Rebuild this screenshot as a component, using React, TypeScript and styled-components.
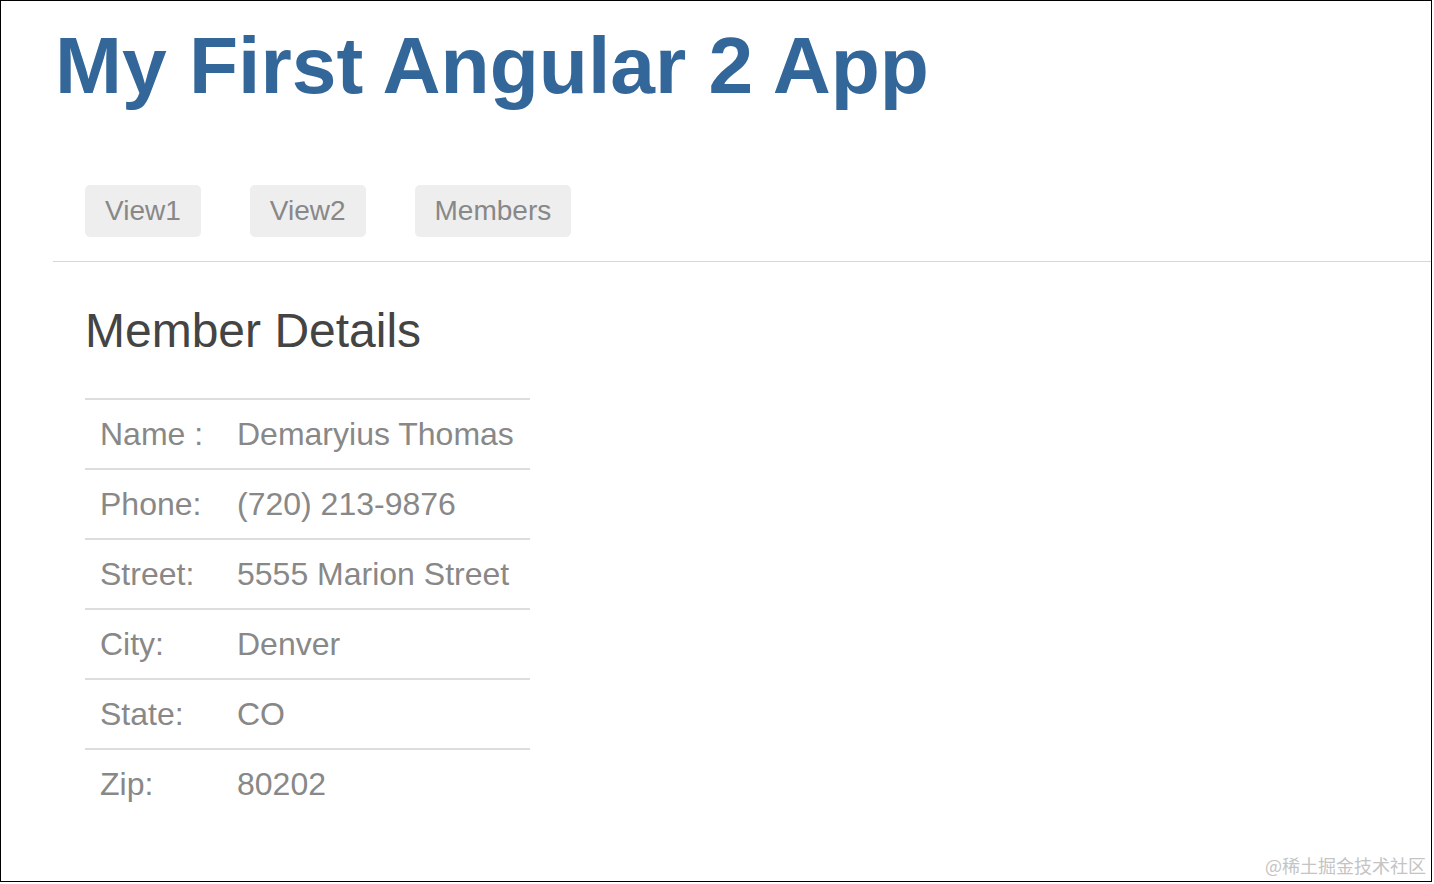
import React from "react";
import styled, { createGlobalStyle } from "styled-components";

const GlobalStyle = createGlobalStyle`
  html, body {
    margin: 0;
    padding: 0;
    background: #fff;
    font-family: "Liberation Sans", Arial, Helvetica, sans-serif;
  }
`;

const Frame = styled.div`
  position: relative;
  box-sizing: border-box;
  width: 1432px;
  height: 882px;
  border: 1px solid #000;
  padding-left: 52px;
  overflow: hidden;
`;

const Title = styled.h1`
  margin: 24px 0 0 2px;
  font-size: 80.4px;
  line-height: 1;
  font-weight: bold;
  color: #336699;
  white-space: nowrap;
`;

const Nav = styled.nav`
  display: flex;
  gap: 49px;
  margin-top: 80px;
  padding-left: 32px;
  padding-bottom: 24px;
  border-bottom: 1px solid #d6d6d6;
`;

const NavButton = styled.a`
  display: block;
  height: 52px;
  line-height: 52px;
  padding: 0 20px;
  font-size: 28px;
  color: #888;
  background: #eeeeee;
  border-radius: 5px;
  text-decoration: none;
  cursor: pointer;
`;

const Section = styled.section`
  padding-left: 32px;
`;

const Heading = styled.h2`
  margin: 45px 0 0 0;
  font-size: 48px;
  line-height: 1;
  font-weight: normal;
  color: #444;
`;

const Table = styled.table`
  margin-top: 43px;
  width: 445px;
  border-collapse: collapse;
  font-size: 32px;
  color: #888;
`;

const Row = styled.tr`
  border-top: 2px solid #dddddd;
`;

const Cell = styled.td<{ $label?: boolean }>`
  height: 68px;
  line-height: 68px;
  padding: 0 15px;
  white-space: nowrap;
  width: ${(p) => (p.$label ? "107px" : "auto")};
`;

const Watermark = styled.div`
  position: absolute;
  right: 5px;
  bottom: 3px;
  font-size: 18px;
  color: #c4c4c4;
  font-family: "Noto Sans CJK SC", "Liberation Sans", sans-serif;
`;

const member = [
  ["Name :", "Demaryius Thomas"],
  ["Phone:", "(720) 213-9876"],
  ["Street:", "5555 Marion Street"],
  ["City:", "Denver"],
  ["State:", "CO"],
  ["Zip:", "80202"],
];

export default function App() {
  return (
    <>
      <GlobalStyle />
      <Frame>
        <Title>My First Angular 2 App</Title>
        <Nav>
          <NavButton>View1</NavButton>
          <NavButton>View2</NavButton>
          <NavButton>Members</NavButton>
        </Nav>
        <Section>
          <Heading>Member Details</Heading>
          <Table>
            <tbody>
              {member.map(([label, value]) => (
                <Row key={label}>
                  <Cell $label>{label}</Cell>
                  <Cell>{value}</Cell>
                </Row>
              ))}
            </tbody>
          </Table>
        </Section>
        <Watermark>@稀土掘金技术社区</Watermark>
      </Frame>
    </>
  );
}
